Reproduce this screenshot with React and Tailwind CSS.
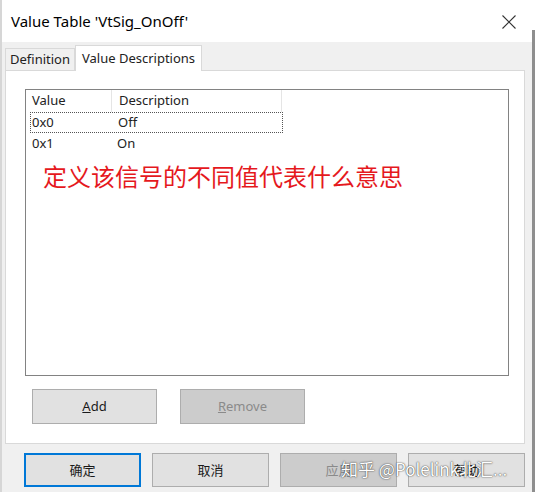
import React from 'react'

const ui = { fontFamily: '"Noto Sans", "Liberation Sans", "Noto Sans CJK SC", sans-serif' }
const cjk = { fontFamily: '"Noto Sans CJK SC", "Noto Sans", sans-serif' }

function Btn({ children, primary, disabled, className = '' }) {
  return (
    <div
      className={`flex items-center justify-center text-[13px] ${
        primary ? 'border-2 border-[#0078d7]' : 'border border-[#adadad]'
      } ${disabled ? 'bg-[#cccccc] text-[#8a8a8a]' : 'bg-[#e1e1e1] text-[#1a1a1a]'} ${className}`}
    >
      {children}
    </div>
  )
}

export default function App() {
  return (
    <div className="relative w-[535px] h-[492px] bg-[#f0f0f0] border-l-2 border-[#d6d6d6] overflow-hidden" style={ui}>
      {/* title bar */}
      <div className="h-[42px] bg-white flex items-center justify-between pl-[9px] pr-[19px]">
        <span className="text-[15px] text-black">Value Table 'VtSig_OnOff'</span>
        <svg width="14" height="14" viewBox="0 0 14 14" className="mt-[1px]">
          <path d="M0.5 0.5 L13.5 13.5 M13.5 0.5 L0.5 13.5" stroke="#333" strokeWidth="1.1" fill="none" />
        </svg>
      </div>
      <div className="absolute right-0 top-[30px] w-[3px] h-[462px] bg-[#8e8e8e]" />

      {/* tabs */}
      <div className="flex items-end pl-[3px] h-[28px]">
        <div className="h-[22px] px-[4px] flex items-center border border-b-0 border-[#d9d9d9] bg-[#f0f0f0] text-[13px] text-[#222]">
          Definition
        </div>
        <div className="h-[26px] px-[6px] flex items-center border border-b-0 border-[#d9d9d9] bg-white text-[13px] text-[#222] -mb-[1px] relative z-10">
          Value Descriptions
        </div>
      </div>

      {/* panel */}
      <div className="ml-[3px] w-[520px] h-[374px] bg-white border border-[#d9d9d9] pt-[18px] pl-[19px]">
        <div className="w-[484px] h-[287px] border border-[#828282] text-[13px] text-[#222]">
          <div className="flex h-[22px] items-center">
            <div className="w-[86px] pl-[6px] h-full flex items-center border-r border-[#e5e5e5]">Value</div>
            <div className="w-[170px] pl-[7px] h-full flex items-center border-r border-[#e5e5e5]">Description</div>
          </div>
          <div className="flex h-[21px] items-center ml-[4px] w-[253px] border border-dotted border-[#555]">
            <div className="w-[82px] pl-[1px]">0x0</div>
            <div className="pl-[5px]">Off</div>
          </div>
          <div className="flex h-[21px] items-center ml-[4px]">
            <div className="w-[82px] pl-[2px]">0x1</div>
            <div className="pl-[5px]">On</div>
          </div>
          <div className="mt-[7px] ml-[17px] text-[24px] leading-[30px] text-[#e5181d]" style={cjk}>
            定义该信号的不同值代表什么意思
          </div>
        </div>
        <div className="flex gap-[23px] mt-[13px] ml-[7px]">
          <Btn className="w-[125px] h-[35px]">
            <span><span className="underline">A</span>dd</span>
          </Btn>
          <Btn className="w-[125px] h-[35px]" disabled>
            <span><span className="underline">R</span>emove</span>
          </Btn>
        </div>
      </div>

      {/* bottom buttons */}
      <div className="flex gap-[11px] pl-[22px] mt-[9px]" style={cjk}>
        <Btn className="w-[117px] h-[34px]" primary>确定</Btn>
        <Btn className="w-[117px] h-[34px]">取消</Btn>
        <Btn className="w-[117px] h-[34px]" disabled>应用</Btn>
        <Btn className="w-[117px] h-[34px]">帮助</Btn>
      </div>

      {/* watermark */}
      <div
        className="absolute left-[339px] top-[456px] text-[17px] text-white whitespace-nowrap"
        style={{ ...cjk, textShadow: '0 0 1px rgba(0,0,0,0.7), 0 0 2px rgba(0,0,0,0.5)' }}
      >
        知乎 @Polelink北汇...
      </div>
    </div>
  )
}
